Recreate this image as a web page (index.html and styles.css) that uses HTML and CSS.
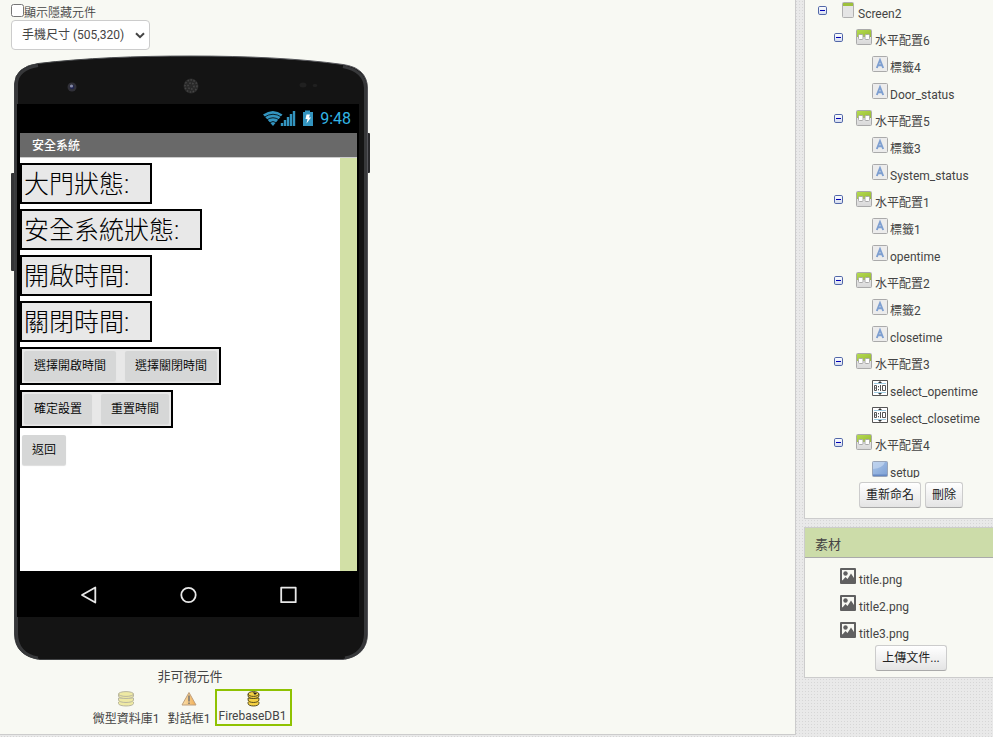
FILE: index.html
```html
<!DOCTYPE html>
<html lang="zh-Hant">
<head>
<meta charset="utf-8">
<title>Designer</title>
<link rel="stylesheet" href="styles.css">
</head>
<body>
<svg class="defs" aria-hidden="true">
  <defs>
    <linearGradient id="gMinus" x2="0" y2="1"><stop stop-color="#fff"/><stop offset="1" stop-color="#d3dbee"/></linearGradient>
    <linearGradient id="gGreen" x2="1" y2="1"><stop stop-color="#b4dc50"/><stop offset="1" stop-color="#98b935"/></linearGradient>
    <linearGradient id="gGrey" x2="0" y2="1"><stop stop-color="#f4f4f4"/><stop offset="1" stop-color="#d8d8d8"/></linearGradient>
    <linearGradient id="gBlue" x2="1" y2="1"><stop stop-color="#a9c6ea"/><stop offset="1" stop-color="#7d9fd3"/></linearGradient>
    <linearGradient id="gWarn" x2="1" y2="0"><stop stop-color="#fbdc9c"/><stop offset="1" stop-color="#ef9a2c"/></linearGradient>
    <symbol id="minus" viewBox="0 0 9 9"><rect x=".5" y=".5" width="8" height="8" rx="1.3" fill="url(#gMinus)" stroke="#5267a8"/><path d="M2 4.5h5" stroke="#0000b5"/></symbol>
    <symbol id="screen" viewBox="0 0 12 16"><rect x=".5" y=".5" width="11" height="15" rx="1" fill="#e5e5e5" stroke="#b0b0b0"/><path d="M1 1h10v3H1z" fill="#9dc03b"/></symbol>
    <symbol id="arr" viewBox="0 0 16 16"><rect x=".5" y=".5" width="15" height="15" rx="1" fill="url(#gGrey)" stroke="#aaa"/><path d="M1 1h14v7H1z" fill="url(#gGreen)"/><rect x="2.500" y="5.500" width="4.500" height="5" rx="1" fill="#fff" stroke="#aaa"/><rect x="9" y="5.500" width="4.500" height="5" rx="1" fill="#fff" stroke="#aaa"/></symbol>
    <symbol id="label" viewBox="0 0 16 16"><rect x=".5" y=".5" width="15" height="15" rx="1" fill="#ececec" stroke="#aaa"/><path d="M4.800 12 8 4l3.200 8M6 9.300h4" fill="none" stroke="#7e9fd0" stroke-width="1.900"/></symbol>
    <symbol id="time" viewBox="0 0 16 16"><path d="M.5.5h15v15H.5z" fill="#fff" stroke="#555"/><path d="M2 3.500h12M2 12.500h12" stroke="#9fcbe0"/><path d="m6 3 2-2 2 2zM6 13l2 2 2-2z" fill="#333"/><path d="M2.500 5.500h2v5h-2zM2.500 8h2M6.500 6v1.300M6.500 9v1.300M8.500 5v6M10.500 5.500h3v5h-3z" fill="none" stroke="#555"/></symbol>
    <symbol id="btn" viewBox="0 0 16 16"><rect x=".5" y=".5" width="15" height="15" rx="1" fill="url(#gBlue)" stroke="#9aa5b8"/><path d="M1 1h12Q11 7 1 8z" fill="#c4d7ef" opacity=".7"/><path d="M1 13.500h14v1.500H1z" fill="#6689c2"/></symbol>
    <symbol id="pic" viewBox="0 0 16 16"><path fill-rule="evenodd" d="M1 0h14q1 0 1 1v14q0 1-1 1H1q-1 0-1-1V1q0-1 1-1zM2 2v10.500h12V2z" fill="#606060"/><circle cx="5.500" cy="5.500" r="2.200" fill="#606060"/><path d="M2 13l3.500-4 2 2L11 5.500l3 4.500v3z" fill="#606060"/></symbol>
    <symbol id="db" viewBox="0 0 18 16"><path d="M1.500 11v1.500c0 3.300 15 3.300 15 0V11"/><path d="M1.500 10.300c0-2 15-2 15 0s-15 3-15 0z" stroke="none"/><path d="M1.500 7v2c0 3.300 15 3.300 15 0V7z"/><path d="M1.500 3v2c0 3.300 15 3.300 15 0V3z"/><ellipse cx="9" cy="3" rx="7.500" ry="2.400"/></symbol>
  </defs>
</svg>
<main class="viewer">
  <label class="hidden-toggle"><input type="checkbox"><span>顯示隱藏元件</span></label>
  <div class="size-select"><span>手機尺寸 (505,320)</span><svg width="10" height="7" viewBox="0 0 10 7"><path d="m1 1.200 4 4 4-4" fill="none" stroke="#444" stroke-width="2"/></svg></div>
  <section class="phone">
    <svg class="shell" width="360" height="606" viewBox="11 55 360 606">
      <defs><linearGradient id="edge" x1="0" x2="1"><stop stop-color="#3c3e40"/><stop offset=".5" stop-color="#55575a"/><stop offset="1" stop-color="#55555a"/></linearGradient></defs>
      <rect x="11" y="173" width="5" height="98" rx="1" fill="#333436"/>
      <rect x="365" y="133" width="5" height="40" rx="1" fill="#29292c"/>
      <path d="M14.500 84Q15 67 38 63.500C85 58 135 56 191 56S300 58.500 343 64.500Q367 68 367.500 88V634Q367 656 343 659.500H40Q15 656 14.500 634Z" fill="#141414" stroke="url(#edge)" stroke-width="1"/>
      <path d="M16.500 84Q17 69 38 65.500M365.500 88Q365 71 343 66.500M16.500 84V634Q17 654 38 658M365.500 88V634Q365 654 345 658" fill="none" stroke="#37383a" stroke-width="3"/>
      <circle cx="72" cy="87" r="4.500" fill="#303038"/><circle cx="72" cy="87" r="2.300" fill="#20244d"/><circle cx="71.500" cy="86" r="1.600" fill="#8589a5"/>
      <circle cx="191" cy="86" r="7.500" fill="#292929"/><circle cx="191" cy="86" r="6" fill="none" stroke="#464646" stroke-width="1.500" stroke-dasharray="1.500 1.500"/><circle cx="191" cy="86" r="3" fill="none" stroke="#464646" stroke-width="1.500" stroke-dasharray="1.500 1.500"/>
      <ellipse cx="303" cy="85" rx="3.500" ry="2.500" fill="#202020"/><ellipse cx="315" cy="85.500" rx="2.200" ry="1.700" fill="#202020"/>
    </svg>
    <div class="display">
      <div class="status">
        <svg width="50" height="18" viewBox="264 110 50 18"><path d="M264 114.500q10-7 19.500 0L274 126z" fill="#3394bf"/><g fill="none" stroke="#000" stroke-width=".8"><path d="M265.500 117q8.500-5.500 17 0M267.500 120q6.500-4.500 13 0M270 123q4-3 8 0"/></g><path d="M283 126v-3M286 126v-6M289 126v-9M292 126v-12M295 126v-15" stroke="#3394bf" stroke-width="2.400"/><path d="M304 112h2v-1.500h5v1.500h3v14h-10z" fill="#3394bf"/><path d="m307.500 114.500h3.500l-1 3h2l-4.500 6 1-4.500h-2z" fill="#fff"/></svg>
        <span>9:48</span>
      </div>
      <div class="titlebar">安全系統</div>
      <div class="form">
        <div class="canvas">
          <div class="box w4">大門狀態:</div>
          <div class="box w6">安全系統狀態:</div>
          <div class="box w4">開啟時間:</div>
          <div class="box w4">關閉時間:</div>
          <div class="box buttons"><span class="abtn wide">選擇開啟時間</span><span class="abtn wide">選擇關閉時間</span></div>
          <div class="box buttons"><span class="abtn mid">確定設置</span><span class="abtn mid">重置時間</span></div>
          <span class="abtn back">返回</span>
        </div>
      </div>
      <div class="nav"><svg width="218" height="18" viewBox="80 586 218 18"><g fill="none" stroke="#e8e8e8" stroke-width="1.800" stroke-linejoin="round"><path d="M95.300 587.500v15L82 595z"/><circle cx="188.500" cy="595" r="7.200"/><path d="M281.200 587.700h14.500v14.500h-14.500z"/></g></svg></div>
    </div>
  </section>
  <div class="invisible-title">非可視元件</div>
  <div class="invisible">
    <div class="comp c1"><svg class="db-pale" width="18" height="16"><use href="#db"/></svg><span>微型資料庫1</span></div>
    <div class="comp c2"><svg width="16" height="16" viewBox="0 0 16 16"><path d="M8 1.500 15 14H1z" fill="url(#gWarn)" stroke="#b28a60"/><path d="M8 4.500v6M8 11.500v1.500" stroke="#555" stroke-width="1.500"/></svg><span>對話框1</span></div>
    <div class="comp selected"><svg class="db-gold" width="13" height="16" viewBox="0 0 18 16" preserveAspectRatio="none"><use href="#db" width="18" height="16"/><path d="M8 1.200l6 .8-3 2z" fill="#222" stroke="none"/></svg><span>FirebaseDB1</span></div>
  </div>
</main>
<aside class="side">
  <section class="panel components">
    <div class="tree">
      <div class="row l0"><svg class="tog"><use href="#minus"/></svg><svg class="ico scr"><use href="#screen"/></svg><span>Screen2</span></div>
      <div class="row l1"><svg class="tog"><use href="#minus"/></svg><svg class="ico"><use href="#arr"/></svg><span>水平配置6</span></div>
      <div class="row l2"><svg class="ico"><use href="#label"/></svg><span>標籤4</span></div>
      <div class="row l2"><svg class="ico"><use href="#label"/></svg><span>Door_status</span></div>
      <div class="row l1"><svg class="tog"><use href="#minus"/></svg><svg class="ico"><use href="#arr"/></svg><span>水平配置5</span></div>
      <div class="row l2"><svg class="ico"><use href="#label"/></svg><span>標籤3</span></div>
      <div class="row l2"><svg class="ico"><use href="#label"/></svg><span>System_status</span></div>
      <div class="row l1"><svg class="tog"><use href="#minus"/></svg><svg class="ico"><use href="#arr"/></svg><span>水平配置1</span></div>
      <div class="row l2"><svg class="ico"><use href="#label"/></svg><span>標籤1</span></div>
      <div class="row l2"><svg class="ico"><use href="#label"/></svg><span>opentime</span></div>
      <div class="row l1"><svg class="tog"><use href="#minus"/></svg><svg class="ico"><use href="#arr"/></svg><span>水平配置2</span></div>
      <div class="row l2"><svg class="ico"><use href="#label"/></svg><span>標籤2</span></div>
      <div class="row l2"><svg class="ico"><use href="#label"/></svg><span>closetime</span></div>
      <div class="row l1"><svg class="tog"><use href="#minus"/></svg><svg class="ico"><use href="#arr"/></svg><span>水平配置3</span></div>
      <div class="row l2"><svg class="ico"><use href="#time"/></svg><span>select_opentime</span></div>
      <div class="row l2"><svg class="ico"><use href="#time"/></svg><span>select_closetime</span></div>
      <div class="row l1"><svg class="tog"><use href="#minus"/></svg><svg class="ico"><use href="#arr"/></svg><span>水平配置4</span></div>
      <div class="row l2"><svg class="ico"><use href="#btn"/></svg><span>setup</span></div>
    </div>
    <div class="actions"><button class="b-rename">重新命名</button><button class="b-delete">刪除</button></div>
  </section>
  <section class="panel media">
    <h2>素材</h2>
    <div class="row file"><svg class="ico"><use href="#pic"/></svg><span>title.png</span></div>
    <div class="row file"><svg class="ico"><use href="#pic"/></svg><span>title2.png</span></div>
    <div class="row file"><svg class="ico"><use href="#pic"/></svg><span>title3.png</span></div>
    <button class="b-upload">上傳文件...</button>
  </section>
</aside>
</body>
</html>
```
FILE: styles.css
```css
* { box-sizing: border-box; }
body {
  margin: 0;
  width: 993px;
  height: 737px;
  overflow: hidden;
  display: grid;
  grid-template-columns: 796px 189px;
  column-gap: 8px;
  font: 12px/16px Roboto, "Noto Sans CJK TC", sans-serif;
  color: #444;
  background-color: #e9e9e9;
  background-image: radial-gradient(#d6d6d6 .7px, transparent .8px);
  background-size: 3px 3px;
}
svg { display: block; flex: none; }
.defs { position: absolute; width: 0; height: 0; }

.viewer {
  height: 735px;
  padding-left: 11px;
  background: #f8f9f3;
  border-right: 1px solid #ccc;
  border-bottom: 1px solid #ccc;
}
.hidden-toggle { display: flex; height: 20px; padding-top: 4px; font-weight: 350; }
.hidden-toggle input { margin: 0; width: 13px; height: 13px; flex: none; }
.hidden-toggle span { line-height: 18px; }
.size-select {
  width: 139px;
  height: 30px;
  padding: 0 4px 0 10px;
  display: flex;
  align-items: center;
  justify-content: space-between;
  background: #fff;
  border: 1px solid #ccc;
  border-radius: 4px;
}

.phone { position: relative; width: 360px; height: 606px; margin-top: 5px; padding: 49px 0 0 6px; }
.shell { position: absolute; left: 0; top: 0; }
.display { position: relative; width: 342px; height: 513px; background: #000; padding: 0 2px 0 3px; }
.status { height: 29px; display: flex; align-items: center; justify-content: flex-end; gap: 7px; padding-right: 6px; color: #33b5e5; font-size: 16px; }
.status span { padding-top: 1px; }
.titlebar { height: 25px; line-height: 26px; padding-left: 12px; background: #696969; border-bottom: 1px solid #ccc; color: #fff; font-weight: 500; }
.form { height: 413px; background: #d2e0a6; }
.canvas { width: 320px; height: 413px; padding-top: 5px; background: #fff; display: flex; flex-direction: column; align-items: flex-start; gap: 5px; color: #000; }
.box { height: 41px; border: 2px solid #000; background: #e8e8e8; padding-left: 2px; font-size: 25px; line-height: 39px; font-weight: 300; white-space: nowrap; }
.w4 { width: 132px; }
.w6 { width: 182px; }
.buttons { height: 38px; display: flex; gap: 9px; padding: 2px; font-size: 12px; }
.abtn { height: 30px; line-height: 30px; text-align: center; background: #d6d7d7; border-radius: 2px; box-shadow: 0 1px 1px #ddd; font-weight: 350; }
.wide { width: 92px; }
.mid { width: 68px; }
.back { width: 44px; margin: 2px 0 0 2px; }
.nav { height: 46px; display: flex; align-items: center; padding: 2px 0 0 60px; }

.invisible-title { width: 358px; margin-top: 7px; text-align: center; font-size: 13px; line-height: 18px; }
.invisible { display: flex; margin-top: 3px; padding-left: 81px; }
.comp { display: flex; flex-direction: column; align-items: center; height: 37px; white-space: nowrap; }
.comp span { line-height: 17px; }
.c1, .c2 { padding-top: 2px; }
.c1 span, .c2 span { margin-top: 4px; }
.c1 { width: 68px; }
.c2 { width: 42px; margin: 0 5px 0 8px; }
.c1 svg, .c2 svg { opacity: .8; }
.selected { width: 77px; border: 2px solid #8fc202; }
.selected span { margin: 1px 2px 0 0; }
.db-pale { fill: #ece690; stroke: #aaa68b; }
.db-gold { fill: #f5d143; stroke: #3d3514; }

.side { width: 189px; }
.panel { background: #f8f9f3; border-left: 1px solid #ccc; border-bottom: 1px solid #ccc; }
.components { height: 519px; }
.tree { height: 478px; overflow: hidden; }
.row { height: 27px; display: flex; align-items: flex-start; white-space: nowrap; }
.row span { padding-top: 6px; margin-left: 2px; }
.tog { width: 9px; height: 9px; margin-top: 6px; }
.ico { width: 16px; height: 16px; margin-top: 2px; }
.scr { width: 12px; margin: 2px 2px 0 0; }
.l0 { padding-left: 13px; }
.l0 .ico { margin-left: 15px; }
.l1 { padding-left: 29px; }
.l1 .ico { margin-left: 13px; }
.l1 span { margin-left: 3px; }
.l2 { padding-left: 67px; }
button {
  height: 26px;
  padding: 0;
  font: inherit;
  color: #222;
  text-align: center;
  background: linear-gradient(#fff, #e4e4e4);
  border: 1px solid #ccc;
  border-bottom-color: #aaa;
  border-radius: 3px;
}
.actions { display: flex; gap: 4px; padding: 4px 0 0 54px; }
.b-rename { width: 62px; }
.b-delete { width: 38px; }
.media { height: 151px; margin-top: 8px; border-top: 1px solid #ccc; }
.media h2 { margin: 0 0 8px; height: 30px; padding: 2px 0 0 10px; font-size: 13px; font-weight: 400; line-height: 30px; background: #ccdca9; border-bottom: 1px solid #aaa; }
.file { padding-left: 35px; }
.file span { margin-left: 3px; }
.b-upload { display: block; width: 72px; margin: -2px 0 0 70px; }
```
